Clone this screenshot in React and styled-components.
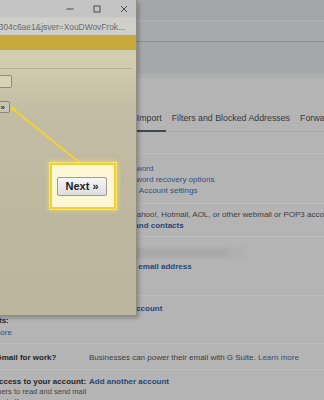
import React from 'react';
import styled, { createGlobalStyle } from 'styled-components';

const GlobalStyle = createGlobalStyle`
  html, body {
    margin: 0;
    padding: 0;
  }
  body {
    width: 324px;
    height: 400px;
    overflow: hidden;
    background: #b4b4b4;
    font-family: "Liberation Sans", Arial, sans-serif;
  }
`;

const Screen = styled.div`
  position: relative;
  width: 324px;
  height: 400px;
  overflow: hidden;
  background: #b4b4b4;
`;

// gmail settings page behind the popup
const SettingsPage = styled.div`
  display: flex;
  flex-direction: column;
`;

const Band = styled.div`
  height: ${p => p.h}px;
  background: ${p => p.bg};
`;

const TabBar = styled.div`
  display: flex;
  gap: 2px;
  height: 26px;
  margin-top: 27px;
  padding-left: 77px;
  border-bottom: 1px solid #aaaaaa;
  white-space: nowrap;
`;

const Tab = styled.div`
  display: flex;
  align-items: center;
  padding: 0 4px;
  font-size: 8.8px;
  color: #383838;
  border-bottom: 2px solid ${p => (p.active ? '#41464f' : 'transparent')};
  margin-bottom: -1px;
`;

const Row = styled.div`
  display: grid;
  grid-template-columns: 118px 1fr;
  margin-left: -29px;
  margin-top: ${p => p.mt || 0}px;
  padding: ${p => p.pt}px 0 ${p => p.pb}px;
  border-top: 1px solid #bdbdbd;
  font-size: 8px;
  line-height: ${p => p.lh || 11}px;
  color: #3d3d3d;
  white-space: nowrap;
`;

const Label = styled.div`
  font-weight: bold;
  color: #262626;
`;

const Sub = styled.div`
  width: 116px;
  font-weight: normal;
  font-size: 7.5px;
  line-height: 10px;
  color: #444;
  white-space: normal;
`;

const Value = styled.div`
  display: flex;
  flex-direction: column;
`;

const Link = styled.span`
  color: ${p => (p.bold ? '#28467a' : '#33507e')};
  font-weight: ${p => (p.bold ? 'bold' : 'normal')};
`;

const Redacted = styled.div`
  width: 156px;
  height: 10px;
  margin-bottom: 3px;
  background: linear-gradient(90deg, #a8a8a8 0%, #a8a8a8 86%, #afafaf 90%, #b1b1b1 100%);
  filter: blur(1.5px);
`;

// popup window
const Popup = styled.div`
  position: absolute;
  left: -120px;
  top: 0;
  width: 256px;
  height: 315px;
  display: flex;
  flex-direction: column;
  overflow: hidden;
  border-right: 1px solid #8f8c82;
  border-bottom: 1px solid #8f8c82;
  box-shadow: 2px 2px 4px rgba(0, 0, 0, 0.25);
  background: linear-gradient(180deg, #d5cfb2 0px, #d3cdb0 60px, #c3bda5 110px, #bdb7a0 220px, #bcb69f 100%);
`;

const TitleBar = styled.div`
  height: 17px;
  display: flex;
  justify-content: flex-end;
  align-items: center;
  gap: 17px;
  padding-right: 7px;
  background: #c4c4c4;
  border-bottom: 1px solid #cacaca;
`;

const WinIcon = styled.svg`
  width: 10px;
  height: 10px;
  display: block;
`;

const UrlBar = styled.div`
  height: 17px;
  display: flex;
  justify-content: flex-end;
  align-items: center;
  padding-right: 11px;
  background: #cfcfcb;
  font-size: 8.4px;
  color: #6a6a6a;
  white-space: nowrap;
  overflow: hidden;
`;

const GoldBar = styled.div`
  height: 15px;
  background: #c8aa3c;
`;

const PopBody = styled.div`
  display: flex;
  flex-direction: column;
  align-items: flex-end;
  padding-right: 124px;
`;

const Rule = styled.div`
  align-self: stretch;
  height: 1px;
  margin: 18px -119px 0 0;
  background: #b6b099;
`;

const Field = styled.div`
  width: 100px;
  height: 11px;
  margin-top: 6px;
  border: 1px solid #8f8b7d;
  border-radius: 2px;
  background: #d8d2b7;
`;

const SmallButton = styled.div`
  height: 10px;
  margin: 13px 2px 0 0;
  padding: 0 4px;
  display: flex;
  align-items: center;
  border: 1px solid #88857a;
  border-radius: 2px;
  background: #c9c5b3;
  font-size: 8px;
  font-weight: bold;
  color: #333;
  white-space: nowrap;
`;

const Pointer = styled.svg`
  position: absolute;
  left: 0;
  top: 0;
  width: 324px;
  height: 400px;
  pointer-events: none;
`;

const Callout = styled.div`
  position: absolute;
  left: 50px;
  top: 163px;
  width: 60px;
  height: 42px;
  display: flex;
  align-items: center;
  justify-content: center;
  padding-right: 2px;
  border: 2px solid #f2d12c;
  background: #fcf7d4;
  box-shadow: 0 0 0 1px #f8e478, 0 0 4px 2px rgba(250, 226, 90, 0.55);
`;

const NextButton = styled.div`
  height: 17px;
  padding: 0 7px;
  display: flex;
  align-items: center;
  border: 1px solid #9b9b9b;
  border-radius: 2px;
  background: linear-gradient(180deg, #f6f6f6, #dedede);
  font-size: 11px;
  font-weight: bold;
  color: #1c1c1c;
  white-space: nowrap;
`;

export default function App() {
  return (
    <Screen>
      <GlobalStyle />
      <SettingsPage>
        <Band h={20} bg="#a5a6aa" />
        <Band h={2} bg="#aeafb2" />
        <Band h={19} bg="#a7a8ab" />
        <Band h={1} bg="#8e8f92" />
        <Band h={32} bg="#a6a7aa" />
        <Band h={4} bg="#aeafb1" />

        <TabBar>
          <Tab active>Accounts and Import</Tab>
          <Tab>Filters and Blocked Addresses</Tab>
          <Tab>Forwarding and POP/IMAP</Tab>
        </TabBar>

        <Row mt={21} pt={9} pb={7}>
          <Label>Change account settings:</Label>
          <Value>
            <Link>Change password</Link>
            <Link>Change password recovery options</Link>
            <Link>Other Google Account settings</Link>
          </Value>
        </Row>

        <Row pt={5} pb={5}>
          <Label>Import mail and contacts:</Label>
          <Value>
            <span>Import from Yahoo!, Hotmail, AOL, or other webmail or POP3 account.</span>
            <Link bold>Import mail and contacts</Link>
          </Value>
        </Row>

        <Row pt={11} pb={23}>
          <Label>Send mail as:</Label>
          <Value>
            <Redacted />
            <Link bold>Add another email address</Link>
          </Value>
        </Row>

        <Row pt={7} pb={4} lh={12}>
          <Label>
            Check mail from other
            <br />
            accounts:
            <br />
            <Link>Learn more</Link>
          </Label>
          <Value>
            <Link bold>Add a mail account</Link>
          </Value>
        </Row>

        <Row pt={8} pb={6}>
          <Label>Using Gmail for work?</Label>
          <Value>
            <span>
              Businesses can power their email with G Suite. <Link>Learn more</Link>
            </span>
          </Value>
        </Row>

        <Row pt={6} pb={4}>
          <Label>
            Grant access to your account:
            <Sub>Allow others to read and send mail on your behalf</Sub>
          </Label>
          <Value>
            <Link bold>Add another account</Link>
          </Value>
        </Row>
      </SettingsPage>

      <Popup>
        <TitleBar>
          <WinIcon viewBox="0 0 10 10">
            <line x1="1.5" y1="5" x2="8.5" y2="5" stroke="#4c4c4c" strokeWidth="1" />
          </WinIcon>
          <WinIcon viewBox="0 0 10 10">
            <rect x="2" y="2" width="6" height="6" fill="none" stroke="#4c4c4c" strokeWidth="1" />
          </WinIcon>
          <WinIcon viewBox="0 0 10 10">
            <path d="M2 2 L8 8 M8 2 L2 8" stroke="#4c4c4c" strokeWidth="1" />
          </WinIcon>
        </TitleBar>
        <UrlBar>https://mail.google.com/mail/u/0/?ui=2&amp;ik=5bo304c6ae1&amp;jsver=XouDWovFrok...</UrlBar>
        <GoldBar />
        <PopBody>
          <Rule />
          <Field />
          <SmallButton>Next »</SmallButton>
        </PopBody>
      </Popup>

      <Pointer viewBox="0 0 324 400">
        <line x1="13" y1="109" x2="80" y2="163" stroke="#f2d232" strokeWidth="2" />
        <circle cx="13" cy="109" r="2.3" fill="#f2d232" />
      </Pointer>

      <Callout>
        <NextButton>Next »</NextButton>
      </Callout>
    </Screen>
  );
}
